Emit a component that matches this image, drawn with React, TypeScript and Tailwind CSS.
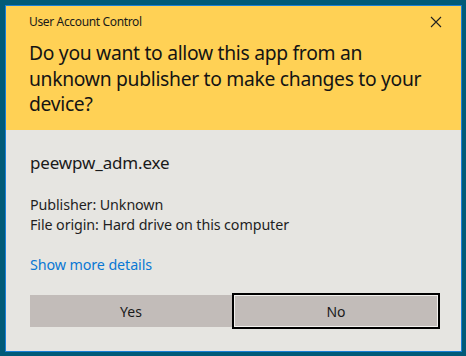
import React from "react";

export default function App() {
  return (
    <div
      className="w-[466px] h-[356px] bg-[#005a78] pl-[5px] pt-[5px] pr-[4px] pb-[4px] flex"
      style={{ fontFamily: '"Noto Sans", "Open Sans", sans-serif' }}
    >
      <div className="flex-1 flex flex-col border border-[#1a7fd6] bg-[#e6e5e1]">
        <div className="bg-[#ffd155] h-[124px] flex flex-col pl-[23px] pr-[16px]">
          <div className="flex items-center justify-between h-[30px] pt-[1px]">
            <span className="text-[12px] text-[#1a1a1a] tracking-[-0.35px]">User Account Control</span>
            <svg width="12" height="12" viewBox="0 0 12 12" className="mr-[3px]">
              <path d="M1 1 L11 11 M11 1 L1 11" stroke="#222" strokeWidth="1.1" />
            </svg>
          </div>
          <div className="text-[19.3px] leading-[25.5px] text-[#141414] tracking-[-0.3px] pt-[4px]">
            Do you want to allow this app from an
            <br />
            unknown publisher to make changes to your
            <br />
            device?
          </div>
        </div>
        <div className="flex-1 flex flex-col pl-[24px] pr-[21px]">
          <div className="text-[17px] text-[#1a1a1a] tracking-[-0.15px] mt-[23px] leading-[20px]">
            peewpw_adm.exe
          </div>
          <div className="text-[14.3px] text-[#1f1f1f] leading-[20px] mt-[22px] tracking-[-0.1px]">
            <div>Publisher: Unknown</div>
            <div>File origin: Hard drive on this computer</div>
          </div>
          <div className="text-[14.3px] text-[#0a78d4] leading-[20px] mt-[20px] tracking-[-0.1px]">
            Show more details
          </div>
          <div className="flex mt-[18px]">
            <div className="w-[202px] h-[32px] mt-[2px] bg-[#c2bcb9] flex items-center justify-center text-[14px] text-[#1a1a1a]">
              Yes
            </div>
            <div className="flex-1 h-[36px] border-2 border-black p-[1px] bg-[#f2f0ee]">
              <div className="w-full h-full bg-[#c2bcb9] flex items-center justify-center text-[14px] text-[#1a1a1a]">
                No
              </div>
            </div>
          </div>
        </div>
      </div>
    </div>
  );
}
